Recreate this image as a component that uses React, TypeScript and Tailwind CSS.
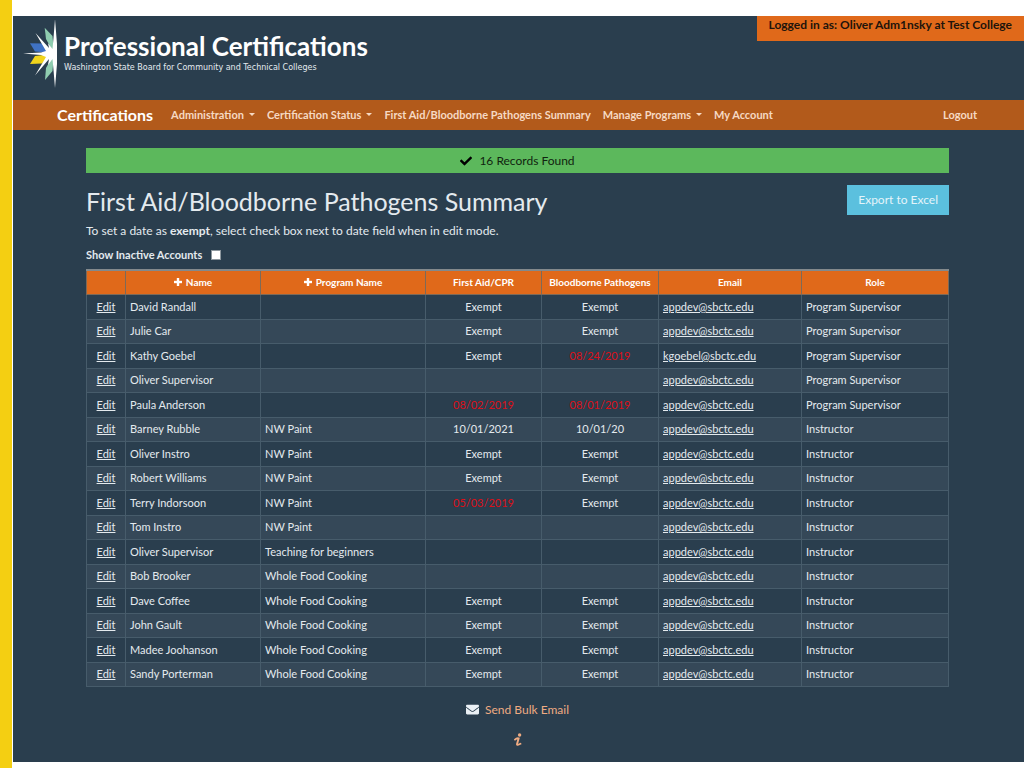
import { FaCheck, FaEnvelope } from "react-icons/fa"

type Row = {
  name: string
  program?: string
  firstAid?: string
  pathogens?: string
  email?: string
  role?: string
}

const rows: Row[] = [
  { name: "David Randall", firstAid: "Exempt", pathogens: "Exempt", role: "Program Supervisor" },
  { name: "Julie Car", firstAid: "Exempt", pathogens: "Exempt", role: "Program Supervisor" },
  { name: "Kathy Goebel", firstAid: "Exempt", pathogens: "08/24/2019", email: "kgoebel@sbctc.edu", role: "Program Supervisor" },
  { name: "Oliver Supervisor", role: "Program Supervisor" },
  { name: "Paula Anderson", firstAid: "08/02/2019", pathogens: "08/01/2019", role: "Program Supervisor" },
  { name: "Barney Rubble", program: "NW Paint", firstAid: "10/01/2021", pathogens: "10/01/20" },
  { name: "Oliver Instro", program: "NW Paint", firstAid: "Exempt", pathogens: "Exempt" },
  { name: "Robert Williams", program: "NW Paint", firstAid: "Exempt", pathogens: "Exempt" },
  { name: "Terry Indorsoon", program: "NW Paint", firstAid: "05/03/2019", pathogens: "Exempt" },
  { name: "Tom Instro", program: "NW Paint" },
  { name: "Oliver Supervisor", program: "Teaching for beginners" },
  { name: "Bob Brooker", program: "Whole Food Cooking" },
  { name: "Dave Coffee", program: "Whole Food Cooking", firstAid: "Exempt", pathogens: "Exempt" },
  { name: "John Gault", program: "Whole Food Cooking", firstAid: "Exempt", pathogens: "Exempt" },
  { name: "Madee Joohanson", program: "Whole Food Cooking", firstAid: "Exempt", pathogens: "Exempt" },
  { name: "Sandy Porterman", program: "Whole Food Cooking", firstAid: "Exempt", pathogens: "Exempt" },
]

const columns = [
  { label: "", width: "w-[39px]" },
  { label: "Name", width: "w-[135px]", sortable: true },
  { label: "Program Name", width: "w-[165px]", sortable: true },
  { label: "First Aid/CPR", width: "w-[116px]" },
  { label: "Bloodborne Pathogens", width: "w-[117px]" },
  { label: "Email", width: "w-[143px]" },
  { label: "Role", width: "w-auto" },
]

function Logo() {
  return (
    <svg width="36" height="68" viewBox="0 0 36 68" aria-hidden="true">
      <path d="M21.7 7.7 L29.5 16 L31 33 L23 19 Z" fill="#8fcdb0" />
      <path d="M22 60 L29.5 51 L31 34 L23 48 Z" fill="#8fcdb0" />
      <path d="M7 23.3 L19 23.6 L29 33 L12 31.5 Z" fill="#3f72c4" />
      <path d="M7 44 L19 43.5 L29 34 L12 36 Z" fill="#f2d51c" />
      <path
        d="M32 -1 L34 24 V44 L32 68 L30.5 50 L29.5 39 L25 45 L26 39 L12 55.5 L23 37 L18 35 L-0.5 33.5 L18 32.5 L23 31 L12.5 13 L26 28 L25 23 L29.5 29 L30.5 18 Z"
        fill="#fff"
      />
    </svg>
  )
}

function PlusIcon() {
  return (
    <svg width="8" height="8" viewBox="0 0 8 8" aria-hidden="true">
      <path d="M3 0h2v3h3v2H5v3H3V5H0V3h3z" fill="currentColor" stroke="currentColor" strokeWidth="0.4" />
    </svg>
  )
}

function NavItem({ label, menu }: { label: string; menu?: boolean }) {
  if (!menu) {
    return (
      <a href="#" className="whitespace-nowrap">
        {label}
      </a>
    )
  }
  return (
    <button type="button" className="flex items-center gap-[5px] whitespace-nowrap">
      {label}
      <svg width="6" height="6" viewBox="0 0 6 6" aria-hidden="true">
        <path d="M0 1h6L3 4z" fill="currentColor" />
      </svg>
    </button>
  )
}

function DateCell({ value }: { value?: string }) {
  const expired = value?.endsWith("/2019")
  return (
    <td className={`border border-[#475c6b] text-center ${expired ? "text-[#dc0f18]" : ""}`}>{value}</td>
  )
}

export default function App() {
  return (
    <div className="min-h-screen border-l-12 border-[#f4cf12] bg-white pt-4 pb-[6px] pl-px font-['Lato',sans-serif] text-[#e4eaee]">
      <div className="min-h-[746px] bg-[#2a3e4e]">
        <header className="flex items-start justify-between">
          <div className="flex h-[84px] items-start pt-[4px] pl-[10px]">
            <Logo />
            <div className="pt-[10px] pl-[5px]">
              <div className="text-[26px] leading-8 font-bold text-white">Professional Certifications</div>
              <div className="font-['DejaVu_Sans',sans-serif] text-[8px] leading-3">
                Washington State Board for Community and Technical Colleges
              </div>
            </div>
          </div>
          <div className="h-[25px] bg-[#e0691a] px-3 text-[12px] leading-[18px] font-bold whitespace-nowrap text-[#21140c]">
            Logged in as: Oliver Adm1nsky at Test College
          </div>
        </header>

        <nav className="flex h-[30px] items-center bg-[#b25a1b] pr-[47px] pl-11 text-[11px] font-bold text-[#f6d9c3]">
          <a href="#" className="mr-[18px] text-[16px] text-white">
            Certifications
          </a>
          <div className="flex items-center gap-3">
            <NavItem label="Administration" menu />
            <NavItem label="Certification Status" menu />
            <NavItem label="First Aid/Bloodborne Pathogens Summary" />
            <NavItem label="Manage Programs" menu />
            <NavItem label="My Account" />
          </div>
          <a href="#" className="ml-auto">
            Logout
          </a>
        </nav>

        <main className="pt-[18px] pr-[75px] pl-[73px]">
          <div className="flex h-[25px] items-center justify-center gap-[7px] bg-[#5cb85c] text-[12px] text-[#10240f]">
            <FaCheck size={12} className="text-black" />
            16 Records Found
          </div>

          <div className="mt-3 flex items-start justify-between">
            <h1 className="text-[25px] leading-8">First Aid/Bloodborne Pathogens Summary</h1>
            <button type="button" className="h-[30px] bg-[#5bc0de] px-[11px] text-[12px] text-[#e4f4fa]">
              Export to Excel
            </button>
          </div>

          <p className="mt-[6px] text-[12px] leading-4">
            To set a date as <strong>exempt</strong>, select check box next to date field when in edit mode.
          </p>

          <label className="mt-2 flex h-4 items-center gap-[9px] text-[11px] font-bold">
            Show Inactive Accounts
            <input type="checkbox" className="size-[10px] appearance-none border border-[#8d979e] bg-white" />
          </label>

          <table className="mt-[6px] w-full table-fixed border-collapse text-[11px] leading-4">
            <thead>
              <tr className="h-6 border-t-2 border-[#83898c] bg-[#e0691a] text-[10px] text-white">
                {columns.map((col) => (
                  <th key={col.label} className={`border-x border-b border-[#7d6a58] whitespace-nowrap ${col.width}`}>
                    {col.sortable ? (
                      <button type="button" className="inline-flex items-center gap-1 font-bold">
                        <PlusIcon />
                        {col.label}
                      </button>
                    ) : (
                      col.label
                    )}
                  </th>
                ))}
              </tr>
            </thead>
            <tbody>
              {rows.map((row, i) => (
                <tr key={i} className="h-[25px] even:h-6 even:bg-[#354858] last:h-[25px]">
                  <td className="border border-[#475c6b] text-center">
                    <a href="#" className="underline">
                      Edit
                    </a>
                  </td>
                  <td className="border border-[#475c6b] px-1">{row.name}</td>
                  <td className="border border-[#475c6b] px-1">{row.program}</td>
                  <DateCell value={row.firstAid} />
                  <DateCell value={row.pathogens} />
                  <td className="border border-[#475c6b] px-1">
                    <a href="#" className="underline">
                      {row.email ?? "appdev@sbctc.edu"}
                    </a>
                  </td>
                  <td className="border border-[#475c6b] px-1">{row.role ?? "Instructor"}</td>
                </tr>
              ))}
            </tbody>
          </table>

          <div className="mt-[14px] flex flex-col items-center gap-3 text-[12px] text-[#efab82]">
            <a href="#" className="flex items-center gap-[6px] leading-[18px]">
              <FaEnvelope size={13} className="text-[#eaf0f5]" />
              Send Bulk Email
            </a>
            <button type="button" aria-label="Information" className="pt-0.5">
              <svg width="8" height="14" viewBox="0 0 8 14" aria-hidden="true">
                <circle cx="5.6" cy="2" r="1.7" fill="currentColor" />
                <path
                  d="M1 6.6 Q2.6 5 4.6 5.4 L3 11.2 Q3 12.8 6.4 10.8"
                  fill="none"
                  stroke="currentColor"
                  strokeWidth="1.9"
                  strokeLinecap="round"
                />
              </svg>
            </button>
          </div>
        </main>
      </div>
    </div>
  )
}
